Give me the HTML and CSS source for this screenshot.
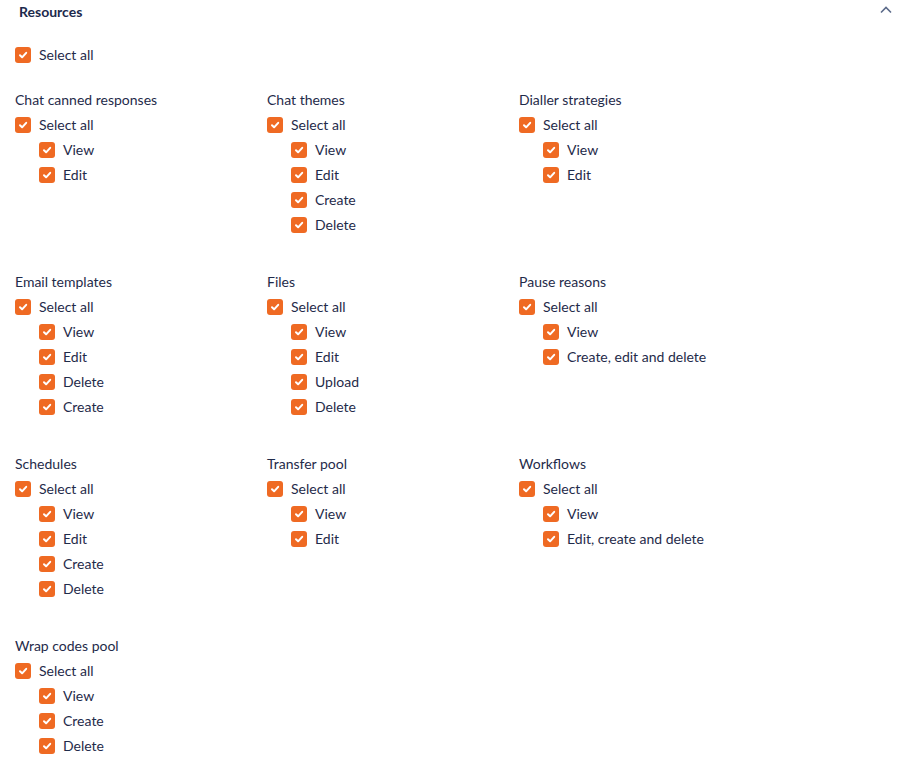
FILE: index.html
```html
<!DOCTYPE html>
<html lang="en">
<head>
  <meta charset="UTF-8">
  <title>Resources</title>
  <link rel="stylesheet" href="styles.css">
</head>
<body>
  <div class="panel">
    <div class="panel-header">
      <span class="panel-title">Resources</span>
      <svg class="chevron" width="14" height="10" viewBox="0 0 14 10"><polyline points="2,7.5 7,2.5 12,7.5" fill="none" stroke="#5c6b8a" stroke-width="1.6"/></svg>
    </div>

    <label class="row top-all"><span class="box"><svg viewBox="0 0 16 16"><path d="M5 8.3 L7.1 10.3 L11.2 5.8" fill="none" stroke="#fff" stroke-width="2" stroke-linecap="round" stroke-linejoin="round"/></svg></span>Select all</label>

    <div class="groups" id="groups"></div>
  </div>

  <script>
    var groups = [
      ['Chat canned responses', ['View', 'Edit']],
      ['Chat themes', ['View', 'Edit', 'Create', 'Delete']],
      ['Dialler strategies', ['View', 'Edit']],
      ['Email templates', ['View', 'Edit', 'Delete', 'Create']],
      ['Files', ['View', 'Edit', 'Upload', 'Delete']],
      ['Pause reasons', ['View', 'Create, edit and delete']],
      ['Schedules', ['View', 'Edit', 'Create', 'Delete']],
      ['Transfer pool', ['View', 'Edit']],
      ['Workflows', ['View', 'Edit, create and delete']],
      ['Wrap codes pool', ['View', 'Create', 'Delete']]
    ];
    var tick = '<span class="box"><svg viewBox="0 0 16 16"><path d="M5 8.3 L7.1 10.3 L11.2 5.8" fill="none" stroke="#fff" stroke-width="2" stroke-linecap="round" stroke-linejoin="round"/></svg></span>';

    var html = '';
    groups.forEach(function(g) {
      html += '<div class="group"><div class="group-title">' + g[0] + '</div>';
      html += '<label class="row">' + tick + 'Select all</label>';
      g[1].forEach(function(item) {
        html += '<label class="row sub">' + tick + item + '</label>';
      });
      html += '</div>';
    });
    document.getElementById('groups').innerHTML = html;
  </script>
</body>
</html>
```

FILE: styles.css
```css
body {
  margin: 0;
  background: #fff;
  font-family: Lato, 'Open Sans', sans-serif;
  font-size: 14px;
  color: #1f2b4a;
}
.panel {
  padding: 0 15px;
}
.panel-header {
  display: flex;
  align-items: center;
  justify-content: space-between;
  height: 24px;
  padding-left: 4px;
  padding-right: 4px;
}
.panel-title {
  font-weight: 700;
  color: #1c2a4c;
  margin-top: -2px;
}
.chevron {
  display: block;
  margin-top: -4px;
}
.row {
  display: flex;
  align-items: center;
  height: 25px;
  cursor: pointer;
}
.top-all {
  margin-top: 18px;
}
.row.sub {
  padding-left: 24px;
}
.box {
  width: 16px;
  height: 16px;
  border-radius: 3px;
  background: #ef6a23;
  margin-right: 8px;
  flex-shrink: 0;
}
.box svg {
  display: block;
  width: 16px;
  height: 16px;
}
.groups {
  display: grid;
  grid-template-columns: 252px 252px 252px;
  row-gap: 32px;
  margin-top: 20px;
}
.group-title {
  height: 25px;
  line-height: 25px;
}
```
